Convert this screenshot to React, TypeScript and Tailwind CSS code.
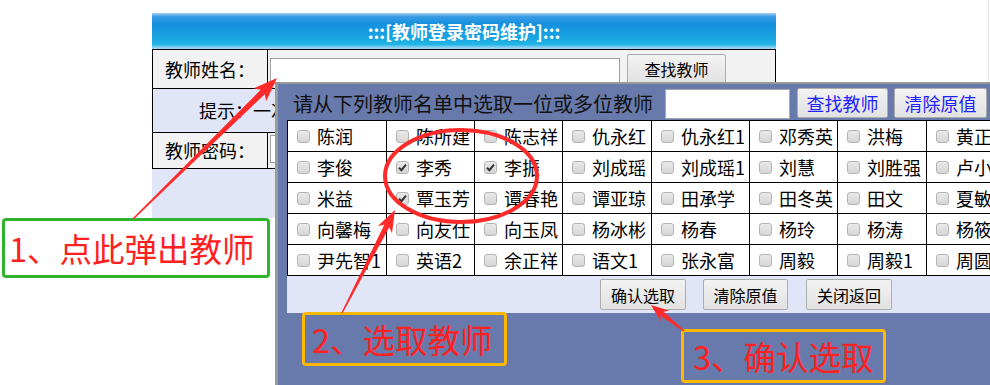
import React from 'react';

const rows: string[][] = [
  ['陈润', '陈所建', '陈志祥', '仇永红', '仇永红1', '邓秀英', '洪梅', '黄正华'],
  ['李俊', '李秀', '李振', '刘成瑶', '刘成瑶1', '刘慧', '刘胜强', '卢小英'],
  ['米益', '覃玉芳', '谭春艳', '谭亚琼', '田承学', '田冬英', '田文', '夏敏华'],
  ['向馨梅', '向友仕', '向玉凤', '杨冰彬', '杨春', '杨玲', '杨涛', '杨筱琴'],
  ['尹先智1', '英语2', '余正祥', '语文1', '张永富', '周毅', '周毅1', '周圆圆'],
];

const checkedNames = ['李秀', '李振', '覃玉芳'];

const grayBtn =
  'flex items-center justify-center rounded-[2px] border border-[#adadad] bg-[linear-gradient(#f2f2f2,#e2e2e2)] whitespace-nowrap';

function Checkbox({ checked }: { checked: boolean }) {
  return (
    <span className="relative w-[13px] h-[13px] shrink-0 rounded-[3px] border border-[#b4b4b4] bg-[linear-gradient(#e9e9e9,#d6d6d6)]">
      {checked && (
        <svg viewBox="0 0 13 13" className="absolute -left-px -top-px w-[13px] h-[13px]">
          <path d="M3 6.8 L5.4 9.2 L10 3.6" fill="none" stroke="#333" strokeWidth="2" />
        </svg>
      )}
    </span>
  );
}

type Pt = [number, number];

// tapered annotation arrow, tail -> tip
function Arrow({ from, to, head = 22, half = 8, tail = 1.5, neck = 5.5 }: {
  from: Pt; to: Pt; head?: number; half?: number; tail?: number; neck?: number;
}) {
  const dx = to[0] - from[0];
  const dy = to[1] - from[1];
  const len = Math.hypot(dx, dy);
  const ux = dx / len;
  const uy = dy / len;
  const nx = -uy;
  const ny = ux;
  const bx = to[0] - ux * head;
  const by = to[1] - uy * head;
  const kx = bx + ux * 4;
  const ky = by + uy * 4;
  const pts: Pt[] = [
    [from[0] + (nx * tail) / 2, from[1] + (ny * tail) / 2],
    [kx + (nx * neck) / 2, ky + (ny * neck) / 2],
    [bx + nx * half, by + ny * half],
    to,
    [bx - nx * half, by - ny * half],
    [kx - (nx * neck) / 2, ky - (ny * neck) / 2],
    [from[0] - (nx * tail) / 2, from[1] - (ny * tail) / 2],
  ];
  return <polygon points={pts.map((p) => p.join(',')).join(' ')} fill="#ff2b2b" />;
}

export default function App() {
  return (
    <div className="relative w-[990px] h-[385px] overflow-hidden bg-white text-black font-['Noto_Sans_CJK_SC','Noto_Sans',sans-serif]">
      {/* login password form */}
      <div className="pt-[13px] pl-[152px]">
        <div className="w-[624px]">
          <div className="h-[36px] flex items-center justify-center text-white font-bold text-[18px] bg-[linear-gradient(#a6d0f0_0%,#3a9ce4_10%,#1590df_30%,#1aa8e2_75%,#24b8e6_88%,#7ccaf0_94%,#a8d6f2_100%)]">
            :::[教师登录密码维护]:::
          </div>
          <div className="border-x border-t border-black text-[18px]">
            <div className="flex h-[39px] border-b border-black bg-[#f2f2f2]">
              <div className="w-[115px] border-r border-black flex items-center justify-center">教师姓名：</div>
              <div className="ml-[2px] mt-[8px] w-[350px] h-[26px] bg-white border border-[#a0a0a0]" />
              <div className={`${grayBtn} ml-[7px] mt-[4px] w-[99px] h-[30px] text-[16px]`}>查找教师</div>
            </div>
            <div className="flex items-center h-[44px] border-b border-black bg-[#e0e6f8] pl-[46px] whitespace-nowrap">
              提示：一次可以选取多位教师
            </div>
            <div className="flex h-[36px] border-b border-black bg-[#f2f2f2]">
              <div className="w-[115px] border-r border-black flex items-center justify-center">教师密码：</div>
              <div className="ml-[2px] mt-[2px] w-[350px] h-[28px] bg-white border border-[#a0a0a0]" />
            </div>
          </div>
          <div className="h-[49px] bg-[#e0e6f8]" />
        </div>
      </div>

      <div className="absolute left-[988px] top-0 w-px h-[82px] bg-[#e4e4e4]" />

      {/* teacher picker popup */}
      <div className="absolute left-[275px] top-[82px] w-[715px] h-[303px] overflow-hidden border-l-[3px] border-t-[2px] border-[#9a9a9a] bg-[#6879ab]">
        <div className="flex items-start h-[36px]">
          <div className="pl-[15px] mt-[5px] h-[30px] leading-[30px] text-[20px] text-[#111] whitespace-nowrap">
            请从下列教师名单中选取一位或多位教师
          </div>
          <div className="ml-[12px] mt-[5px] w-[125px] h-[30px] shrink-0 bg-white border border-[#a8a8a8]" />
          <div className={`${grayBtn} ml-[7px] mt-[4px] w-[91px] h-[30px] shrink-0 text-[18px] text-[#1f1fff]`}>查找教师</div>
          <div className={`${grayBtn} ml-[6px] mt-[4px] w-[93px] h-[30px] shrink-0 text-[18px] text-[#1f1fff]`}>清除原值</div>
        </div>

        <div className="ml-[9px] w-[728px]">
          <div className="grid grid-cols-[99px_88px_88px_89px_98px_88px_89px_88px] border-l border-t border-black bg-white">
            {rows.flat().map((name, i) => (
              <div
                key={i}
                className="flex items-center gap-[7px] h-[31px] pl-[9px] border-r border-b border-black text-[18px] leading-[31px] whitespace-nowrap overflow-hidden"
              >
                <Checkbox checked={checkedNames.includes(name)} />
                <span>{name}</span>
              </div>
            ))}
          </div>
          <div className="flex items-start h-[37px] pt-[3px] pl-[313px] bg-[#e0e6f8] text-[16px]">
            <div className={`${grayBtn} w-[86px] h-[31px]`}>确认选取</div>
            <div className={`${grayBtn} ml-[17px] w-[85px] h-[31px]`}>清除原值</div>
            <div className={`${grayBtn} ml-[18px] w-[86px] h-[31px]`}>关闭返回</div>
          </div>
        </div>
      </div>

      {/* tutorial callouts */}
      <div className="absolute left-[2px] top-[218px] w-[268px] h-[60px] flex items-center pl-[4px] rounded-[4px] border-[3px] border-[#2db52d] bg-white text-[32.5px] text-[#ff2020] whitespace-nowrap">
        1、点此弹出教师
      </div>
      <div className="absolute left-[302px] top-[312px] w-[205px] h-[54px] flex items-center pl-[7px] rounded-[4px] border-[3px] border-[#ffb800] text-[32.5px] text-[#ff2020] whitespace-nowrap">
        2、选取教师
      </div>
      <div className="absolute left-[681px] top-[329px] w-[205px] h-[54px] flex items-center pl-[9px] rounded-[4px] border-[3px] border-[#ffb800] text-[32.5px] text-[#ff2020] whitespace-nowrap">
        3、确认选取
      </div>

      <svg className="absolute inset-0 pointer-events-none" width="990" height="385" viewBox="0 0 990 385">
        <ellipse cx="461" cy="176" rx="76" ry="46" fill="none" stroke="#ff2b2b" strokeWidth="4" />
        <Arrow from={[133, 219]} to={[277, 78]} head={24} half={9} neck={6} />
        <Arrow from={[342, 313]} to={[395, 210]} head={22} half={8} />
        <Arrow from={[684, 331]} to={[651, 305]} head={18} half={7} neck={5} />
      </svg>
    </div>
  );
}
